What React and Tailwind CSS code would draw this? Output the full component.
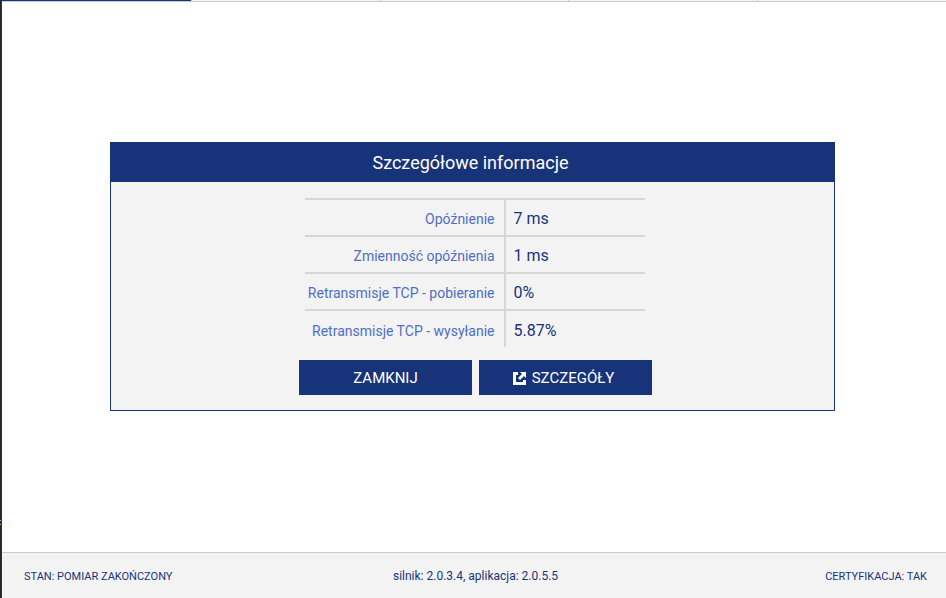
const TABS = ["pomiar", "wyniki", "historia", "mapa", "pomoc"];

const DETAILS = [
  { label: "Opóźnienie", value: "7 ms" },
  { label: "Zmienność opóźnienia", value: "1 ms" },
  { label: "Retransmisje TCP - pobieranie", value: "0%" },
  { label: "Retransmisje TCP - wysyłanie", value: "5.87%" },
];

function OpenIcon() {
  return (
    <svg width="13" height="13" viewBox="0 0 13 13" fill="none" aria-hidden="true">
      <path d="M5 1.5H1.5v10h10V8" stroke="currentColor" strokeWidth="3" />
      <path d="M7 0h6v6l-2-2-4 4-2-2 4-4z" fill="currentColor" />
    </svg>
  );
}

export default function App() {
  return (
    <div className="flex min-h-screen bg-white font-[Roboto,sans-serif] text-[#17337a]">
      {/* Window edge */}
      <div className="flex w-[2px] shrink-0 flex-col justify-end border-r border-[#17337a] bg-[#25252d] pb-[73px]">
        <div className="h-[5px] border-y border-[#f0a050]" />
      </div>

      <div className="flex min-w-0 grow flex-col">
        {/* Bottom edge of the tab bar */}
        <div className="grid h-[2px] grid-cols-5 border-b border-[#cbcbcb] bg-[#f3f3f3]">
          {TABS.map((tab, i) => (
            <div
              key={tab}
              className={i === 0 ? "bg-[#17337a]" : "border-l border-[#cbcbcb]"}
            />
          ))}
        </div>

        <main className="flex grow flex-col justify-center pr-[111px] pb-[2px] pl-[108px]">
          <section className="border border-[#17337a] bg-[#f3f3f3] pb-[15px]">
            <h1 className="bg-[#17337a] pt-px pr-1 text-center text-lg leading-[38px] text-white">
              Szczegółowe informacje
            </h1>

            <div className="flex flex-col items-center pt-4 pl-[6px]">
              <table className="mr-[2px] w-[340px] border-collapse">
                <tbody>
                  {DETAILS.map((row) => (
                    <tr key={row.label} className="h-[37px] border-t-2 border-[#d6d6d6]">
                      <th
                        scope="row"
                        className="w-[200px] border-r-2 border-[#d6d6d6] pt-[4px] pr-[9px] text-right text-sm font-normal whitespace-nowrap text-[#4f6fc4]"
                      >
                        {row.label}
                      </th>
                      <td className="pt-[4px] pl-2 text-base">{row.value}</td>
                    </tr>
                  ))}
                </tbody>
              </table>

              <div className="mt-[13px] flex gap-[7px] text-[15px] text-white">
                <button type="button" className="h-[35px] w-[173px] bg-[#17337a] pt-[2px]">
                  ZAMKNIJ
                </button>
                <button
                  type="button"
                  className="flex h-[35px] w-[173px] items-center justify-center gap-[6px] bg-[#17337a] pt-[2px] pr-1"
                >
                  <OpenIcon />
                  SZCZEGÓŁY
                </button>
              </div>
            </div>
          </section>
        </main>

        <footer className="grid h-[46px] grid-cols-3 content-center items-baseline border-t border-[#cbcbcb] bg-[#f3f3f3] pt-[2px] pr-[19px] pl-[22px] text-xs">
          <span className="text-[11px]">STAN: POMIAR ZAKOŃCZONY</span>
          <span className="text-center">silnik: 2.0.3.4, aplikacja: 2.0.5.5</span>
          <span className="text-right text-[11px]">CERTYFIKACJA: TAK</span>
        </footer>
      </div>
    </div>
  );
}
